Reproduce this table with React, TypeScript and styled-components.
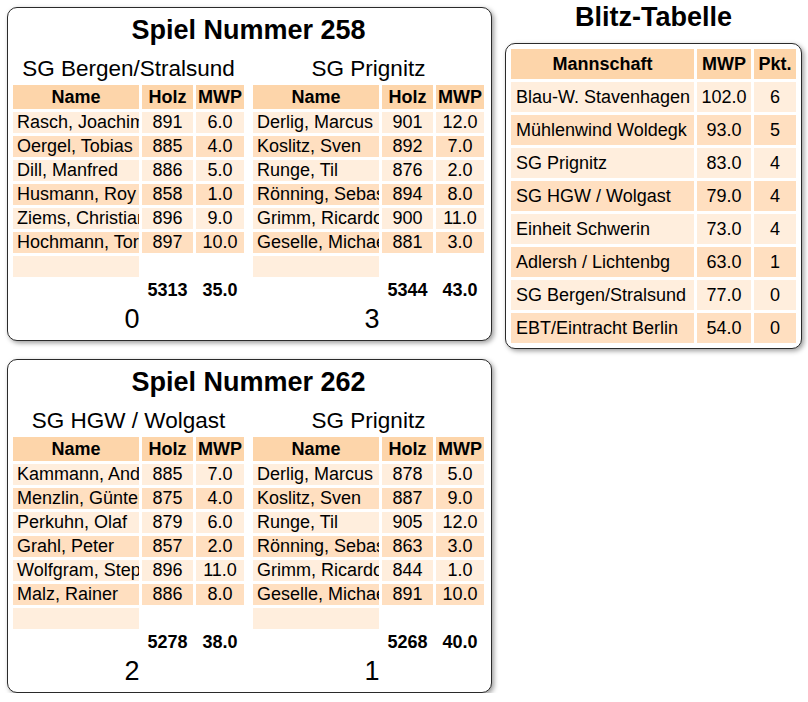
import React from "react";
import styled, { createGlobalStyle } from "styled-components";

const GlobalStyle = createGlobalStyle`
  html, body { margin: 0; padding: 0; background: #ffffff; }
  body {
    font-family: "Liberation Sans", Arial, sans-serif;
    font-size: 18px;
    color: #000;
  }
  * { box-sizing: border-box; }
`;

const HEAD = "#fdd5aa";
const DARK = "#ffdfc0";
const LIGHT = "#ffeedd";

const Page = styled.div`
  display: flex;
  align-items: flex-start;
  padding-left: 7px;
`;

const LeftColumn = styled.div`
  display: flex;
  flex-direction: column;
  gap: 18px;
  padding-top: 7px;
`;

const Card = styled.div<{ $width: number }>`
  width: ${(p) => p.$width}px;
  border: 1px solid #2a2a2a;
  border-radius: 10px;
  background: #fff;
  box-shadow: 2px 2px 5px rgba(0, 0, 0, 0.4);
`;

const GameCard = styled(Card)`
  padding: 2px 4px 5px 2px;
`;

const Title = styled.h2`
  margin: 5px 0 0;
  font-size: 27px;
  line-height: 31px;
  font-weight: bold;
  text-align: center;
`;

const Teams = styled.div`
  display: flex;
  gap: 3px;
  margin-top: 10px;
`;

const TeamColumn = styled.div`
  display: flex;
  flex-direction: column;
  width: 237px;
`;

const TeamName = styled.div`
  font-size: 22.5px;
  line-height: 26px;
  text-align: center;
  white-space: nowrap;
`;

const Score = styled.div`
  font-size: 27px;
  line-height: 31px;
  text-align: center;
  padding-left: 7px;
`;

const Table = styled.table<{ $width: number }>`
  width: ${(p) => p.$width}px;
  table-layout: fixed;
  border-collapse: separate;
  border-spacing: 3px;
`;

const HeadCell = styled.th<{ $h: number }>`
  background: ${HEAD};
  font-weight: bold;
  height: ${(p) => p.$h}px;
  padding: 0;
  text-align: center;
  white-space: nowrap;
  overflow: hidden;
  line-height: 21px;
`;

const Cell = styled.td<{ $bg?: string; $align?: "left" | "center"; $h: number; $bold?: boolean; $indent?: number }>`
  background: ${(p) => p.$bg ?? "transparent"};
  height: ${(p) => p.$h}px;
  padding: 0;
  padding-left: ${(p) => (p.$align === "left" ? `${p.$indent ?? 4}px` : "0")};
  text-align: ${(p) => p.$align ?? "center"};
  white-space: nowrap;
  overflow: hidden;
  line-height: 21px;
  font-weight: ${(p) => (p.$bold ? "bold" : "normal")};
  font-size: 18px;
`;

const RightColumn = styled.div`
  margin-left: 13px;
  display: flex;
  flex-direction: column;
  align-items: center;
`;

const BlitzTitle = styled(Title)`
  margin: 2px 0 0;
`;

const BlitzCard = styled(Card)`
  margin-top: 10px;
  padding: 2px;
`;

type Player = [string, string, string];
type Team = { name: string; players: Player[]; holz: string; mwp: string; score: string };
type Game = { num: string; teams: [Team, Team] };

const games: Game[] = [
  {
    num: "258",
    teams: [
      {
        name: "SG Bergen/Stralsund",
        players: [
          ["Rasch, Joachim", "891", "6.0"],
          ["Oergel, Tobias", "885", "4.0"],
          ["Dill, Manfred", "886", "5.0"],
          ["Husmann, Roy", "858", "1.0"],
          ["Ziems, Christian", "896", "9.0"],
          ["Hochmann, Torsten", "897", "10.0"],
        ],
        holz: "5313",
        mwp: "35.0",
        score: "0",
      },
      {
        name: "SG Prignitz",
        players: [
          ["Derlig, Marcus", "901", "12.0"],
          ["Koslitz, Sven", "892", "7.0"],
          ["Runge, Til", "876", "2.0"],
          ["Rönning, Sebastian", "894", "8.0"],
          ["Grimm, Ricardo", "900", "11.0"],
          ["Geselle, Michael", "881", "3.0"],
        ],
        holz: "5344",
        mwp: "43.0",
        score: "3",
      },
    ],
  },
  {
    num: "262",
    teams: [
      {
        name: "SG HGW / Wolgast",
        players: [
          ["Kammann, Andreas", "885", "7.0"],
          ["Menzlin, Günter", "875", "4.0"],
          ["Perkuhn, Olaf", "879", "6.0"],
          ["Grahl, Peter", "857", "2.0"],
          ["Wolfgram, Stephan", "896", "11.0"],
          ["Malz, Rainer", "886", "8.0"],
        ],
        holz: "5278",
        mwp: "38.0",
        score: "2",
      },
      {
        name: "SG Prignitz",
        players: [
          ["Derlig, Marcus", "878", "5.0"],
          ["Koslitz, Sven", "887", "9.0"],
          ["Runge, Til", "905", "12.0"],
          ["Rönning, Sebastian", "863", "3.0"],
          ["Grimm, Ricardo", "844", "1.0"],
          ["Geselle, Michael", "891", "10.0"],
        ],
        holz: "5268",
        mwp: "40.0",
        score: "1",
      },
    ],
  },
];

const blitz: [string, string, string][] = [
  ["Blau-W. Stavenhagen", "102.0", "6"],
  ["Mühlenwind Woldegk", "93.0", "5"],
  ["SG Prignitz", "83.0", "4"],
  ["SG HGW / Wolgast", "79.0", "4"],
  ["Einheit Schwerin", "73.0", "4"],
  ["Adlersh / Lichtenbg", "63.0", "1"],
  ["SG Bergen/Stralsund", "77.0", "0"],
  ["EBT/Eintracht Berlin", "54.0", "0"],
];

const rowBg = (i: number) => (i % 2 === 0 ? LIGHT : DARK);

function TeamTable({ team }: { team: Team }) {
  return (
    <TeamColumn>
      <TeamName>{team.name}</TeamName>
      <Table $width={237}>
        <colgroup>
          <col style={{ width: 126 }} />
          <col style={{ width: 51 }} />
          <col style={{ width: 48 }} />
        </colgroup>
        <thead>
          <tr>
            <HeadCell $h={24}>Name</HeadCell>
            <HeadCell $h={24}>Holz</HeadCell>
            <HeadCell $h={24}>MWP</HeadCell>
          </tr>
        </thead>
        <tbody>
          {team.players.map((p, i) => (
            <tr key={i}>
              <Cell $h={21} $bg={rowBg(i)} $align="left">{p[0]}</Cell>
              <Cell $h={21} $bg={rowBg(i)}>{p[1]}</Cell>
              <Cell $h={21} $bg={rowBg(i)}>{p[2]}</Cell>
            </tr>
          ))}
          <tr>
            <Cell $h={21} $bg={LIGHT} $align="left"></Cell>
            <Cell $h={21}></Cell>
            <Cell $h={21}></Cell>
          </tr>
          <tr>
            <Cell $h={21}></Cell>
            <Cell $h={21} $bold>{team.holz}</Cell>
            <Cell $h={21} $bold>{team.mwp}</Cell>
          </tr>
        </tbody>
      </Table>
      <Score>{team.score}</Score>
    </TeamColumn>
  );
}

export default function App() {
  return (
    <>
      <GlobalStyle />
      <Page>
        <LeftColumn>
          {games.map((g) => (
            <GameCard key={g.num} $width={485}>
              <Title>Spiel Nummer {g.num}</Title>
              <Teams>
                <TeamTable team={g.teams[0]} />
                <TeamTable team={g.teams[1]} />
              </Teams>
            </GameCard>
          ))}
        </LeftColumn>
        <RightColumn>
          <BlitzTitle>Blitz-Tabelle</BlitzTitle>
          <BlitzCard $width={297}>
            <Table $width={291}>
              <colgroup>
                <col style={{ width: 183 }} />
                <col style={{ width: 54 }} />
                <col style={{ width: 42 }} />
              </colgroup>
              <thead>
                <tr>
                  <HeadCell $h={30}>Mannschaft</HeadCell>
                  <HeadCell $h={30}>MWP</HeadCell>
                  <HeadCell $h={30}>Pkt.</HeadCell>
                </tr>
              </thead>
              <tbody>
                {blitz.map((r, i) => (
                  <tr key={i}>
                    <Cell $h={30} $bg={rowBg(i)} $align="left" $indent={5}>{r[0]}</Cell>
                    <Cell $h={30} $bg={rowBg(i)}>{r[1]}</Cell>
                    <Cell $h={30} $bg={rowBg(i)}>{r[2]}</Cell>
                  </tr>
                ))}
              </tbody>
            </Table>
          </BlitzCard>
        </RightColumn>
      </Page>
    </>
  );
}
